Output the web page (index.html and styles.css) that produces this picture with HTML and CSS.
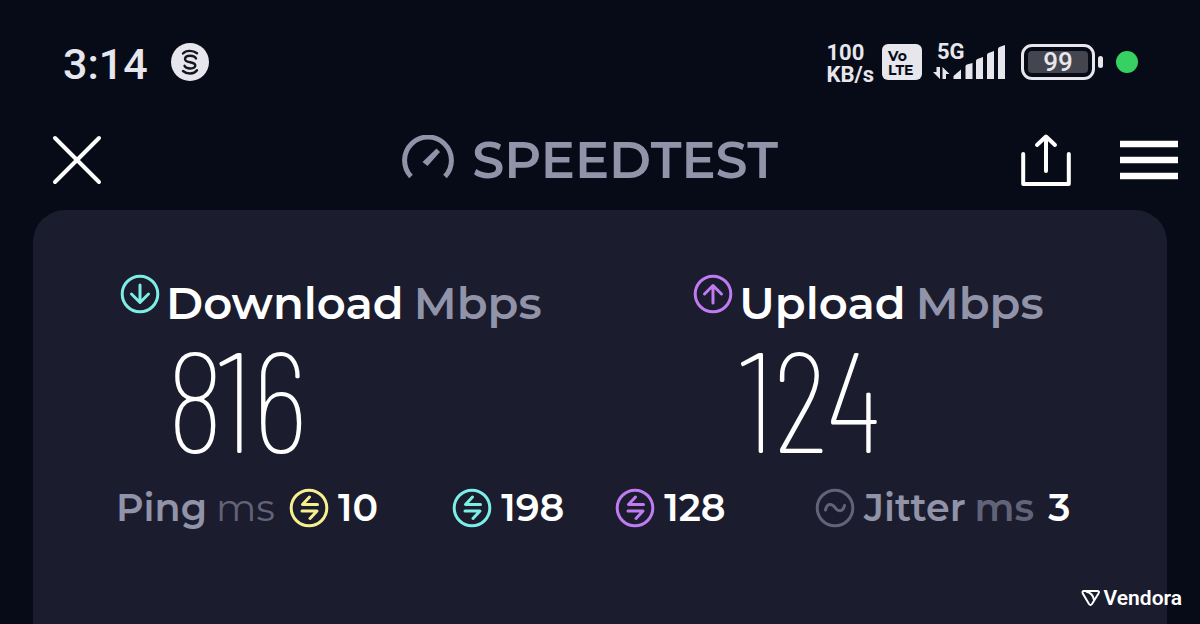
FILE: index.html
```
<!DOCTYPE html>
<html lang="en">
<head>
    <meta charset="UTF-8">
    <meta name="viewport" content="width=device-width, initial-scale=1.0">
    <title>Speedtest</title>
    <link rel="stylesheet" href="styles.css">
</head>
<body>
    <!-- icons used more than once -->
    <svg class="sprite" aria-hidden="true">
        <symbol id="icon-latency" viewBox="0 0 40 40">
            <circle cx="20" cy="20" r="17.8"/>
            <path d="M20.5 9 L13.5 16.5 H28.5 M13 23 H28 L21 30.5"/>
        </symbol>
    </svg>

    <div class="status-bar">
        <span class="clock">3:14</span>
        <svg class="app-badge" viewBox="0 0 38 38" aria-hidden="true">
            <circle cx="19" cy="19" r="19" fill="#e6e6ec"/>
            <g fill="none" stroke="#15161f" stroke-width="2.4" stroke-linecap="round">
                <path d="M25 15.5 C23.5 12 14.5 11.5 14 15.8 C13.6 20.5 24.5 18 24.3 22.5 C24 26.5 15 26.2 13.5 22.8"/>
                <path d="M12 10.5 C15 7 22 7 26 10.3"/>
                <path d="M12 28 C16 31.5 23 31.5 26 27.3"/>
            </g>
        </svg>

        <div class="status-right">
            <span class="net-speed"><span>100</span><span>KB/s</span></span>
            <span class="volte"><span>Vo</span><span>LTE</span></span>
            <span class="signal">
                <span class="signal-label">5G</span>
                <svg viewBox="0 0 74 36" width="74" height="36" fill="#e6e6ec" aria-hidden="true">
                    <path d="M4.5 23 H8 V35 L1 28 H4.5 Z M10.5 35 V23 L17.5 30 H14 V35 Z"/>
                    <path d="M21.5 35 V32 L29 25.5 V35 Z"/>
                    <path d="M33.5 35 V22.5 Q33.5 21 35 20.5 L40.5 19 V35 Z"/>
                    <path d="M44 35 V17 Q44 15.5 45.5 15 L51 13 V35 Z"/>
                    <path d="M55 35 V11 Q55 9.5 56.5 9 L62 7 V35 Z"/>
                    <path d="M66 35 V5 Q66 3.5 67.5 3 L73 1 V35 Z"/>
                </svg>
            </span>
            <span class="battery"><span class="battery-level">99</span></span>
            <span class="privacy-dot"></span>
        </div>
    </div>

    <header class="app-header">
        <div class="header-side">
            <button class="icon-btn" type="button" aria-label="Close">
                <svg viewBox="0 0 50 50" width="50" height="50">
                    <path d="M3 3 L47 47 M47 3 L3 47" fill="none" stroke="#fff" stroke-width="4" stroke-linecap="round"/>
                </svg>
            </button>
        </div>
        <h1 class="brand">
            <svg viewBox="0 0 52 50" width="52" height="50" aria-hidden="true">
                <path d="M9 41.5 A23.4 23.4 0 1 1 43 41.5" fill="none" stroke="#9193a8" stroke-width="5"/>
                <path d="M20.5 27 L34.5 13.5 L38 17 L25.5 31 Z" fill="#9193a8"/>
            </svg>
            SPEEDTEST
        </h1>
        <div class="header-side header-actions">
            <button class="icon-btn" type="button" aria-label="Share">
                <svg viewBox="0 0 50 54" width="50" height="54">
                    <path d="M2.2 21 V51 H47.8 V21 M25 38 V4 M16 12 L25 3.5 L34 12" fill="none" stroke="#fff" stroke-width="4" stroke-linecap="round" stroke-linejoin="round"/>
                </svg>
            </button>
            <button class="icon-btn" type="button" aria-label="Menu">
                <svg viewBox="0 0 58 40" width="58" height="40">
                    <path d="M0 4 H58 M0 20 H58 M0 36 H58" stroke="#fff" stroke-width="6.6"/>
                </svg>
            </button>
        </div>
    </header>

    <main class="card">
        <div class="results">
            <section class="result">
                <svg class="ring download" viewBox="0 0 40 40" aria-hidden="true">
                    <circle cx="20" cy="20" r="17.8"/>
                    <path d="M20 11 V28 M11.5 20 L20 28.5 L28.5 20"/>
                </svg>
                <h2>Download <span class="unit">Mbps</span></h2>
                <p class="speed">816</p>
            </section>
            <section class="result">
                <svg class="ring upload" viewBox="0 0 40 40" aria-hidden="true">
                    <circle cx="20" cy="20" r="17.8"/>
                    <path d="M20 29 V12 M11.5 20 L20 11.5 L28.5 20"/>
                </svg>
                <h2>Upload <span class="unit">Mbps</span></h2>
                <p class="speed">124</p>
            </section>
        </div>

        <div class="latency">
            <div class="metric">
                <span class="label">Ping <span class="ms">ms</span></span>
                <span class="reading">
                    <svg class="ring idle"><use href="#icon-latency"/></svg>
                    <span class="value">10</span>
                </span>
            </div>
            <div class="metric">
                <span class="reading">
                    <svg class="ring download"><use href="#icon-latency"/></svg>
                    <span class="value">198</span>
                </span>
            </div>
            <div class="metric">
                <span class="reading">
                    <svg class="ring upload"><use href="#icon-latency"/></svg>
                    <span class="value">128</span>
                </span>
            </div>
            <div class="metric jitter">
                <span class="reading">
                    <svg class="ring muted" viewBox="0 0 40 40" aria-hidden="true">
                        <circle cx="20" cy="20" r="17.8"/>
                        <path d="M10.5 22 C12 14.5 17 15.5 20 19.5 C23 24 28 24 29.5 17.5"/>
                    </svg>
                    <span class="label">Jitter <span class="ms">ms</span></span>
                </span>
                <span class="value">3</span>
            </div>
        </div>
    </main>

    <div class="watermark">
        <svg viewBox="0 0 20 18" width="20" height="18" aria-hidden="true">
            <path d="M3 2 H16 Q19 2 17.5 4.5 L11 15 Q9.5 17 8 15 L1.8 4.5 Q0.8 2 3 2 Z M5 2.5 C9.5 3.5 12.5 7 13 11" fill="none" stroke="#fff" stroke-width="2"/>
        </svg>
        Vendora
    </div>
</body>
</html>
```
FILE: styles.css
```
* {
    margin: 0;
    padding: 0;
    box-sizing: border-box;
}

body {
    font-family: "Montserrat", "Inter", sans-serif;
    background: #070b18;
    color: #fff;
    min-height: 100vh;
    display: flex;
    flex-direction: column;
    position: relative;
}

.sprite {
    display: none;
}

/* phone status bar */
.status-bar {
    display: flex;
    align-items: center;
    padding: 40px 62px 0 63px;
    height: 84px;
    font-family: "Roboto", sans-serif;
    color: #e6e6ec;
}

.clock {
    padding-top: 3px;
    font-size: 43px;
    font-weight: 500;
    line-height: 44px;
}

.app-badge {
    width: 38px;
    height: 38px;
    margin-left: 23px;
}

.status-right {
    display: flex;
    align-items: center;
    margin-left: auto;
}

.net-speed {
    display: flex;
    flex-direction: column;
    padding-top: 3px;
    font-size: 22px;
    font-weight: 700;
    line-height: 22px;
}

.volte {
    display: flex;
    flex-direction: column;
    align-items: flex-start;
    width: 40px;
    height: 36px;
    margin-left: 8px;
    padding: 5px 6px;
    border-radius: 6px;
    background: #e6e6ec;
    color: #070b18;
    font-family: "Montserrat", "Roboto", sans-serif;
    font-size: 14px;
    font-weight: 700;
    line-height: 14px;
}

.signal {
    position: relative;
    display: flex;
    margin-left: 10px;
}

.signal-label {
    position: absolute;
    top: -2px;
    left: 5px;
    font-size: 22px;
    font-weight: 700;
    line-height: 20px;
}

.battery {
    position: relative;
    width: 74px;
    height: 36px;
    margin-left: 15px;
    padding: 4px;
    border: 3px solid #e6e6ec;
    border-radius: 11px;
}

.battery::after {
    content: "";
    position: absolute;
    top: 9px;
    right: -11px;
    width: 5px;
    height: 12px;
    border-radius: 3px;
    background: #e6e6ec;
}

.battery-level {
    display: block;
    border-radius: 4px;
    background: #45454f;
    font-size: 26px;
    font-weight: 500;
    line-height: 22px;
    text-align: center;
}

.privacy-dot {
    width: 22px;
    height: 22px;
    margin-left: 21px;
    border-radius: 50%;
    background: #36d162;
}

/* app header */
.app-header {
    display: flex;
    align-items: center;
    height: 126px;
    padding: 25px 22px 0 52px;
}

.header-side {
    flex: 7;
    display: flex;
    align-items: center;
}

.header-actions {
    flex: 8;
    justify-content: flex-end;
    gap: 49px;
}

.icon-btn {
    display: flex;
    border: none;
    background: none;
    cursor: pointer;
}

.brand {
    display: flex;
    align-items: center;
    gap: 18px;
    color: #9193a8;
    font-size: 51px;
    font-weight: 600;
    line-height: 56px;
}

/* results card */
.card {
    flex: 1;
    margin: 0 33px;
    padding: 64px 0 32px;
    border-radius: 32px 32px 0 0;
    background: #1b1c2e;
}

.results {
    display: grid;
    grid-template-columns: 23fr 19fr;
    padding-left: 87px;
}

.result {
    display: grid;
    grid-template-columns: 40px 1fr;
    column-gap: 6px;
}

.result h2 {
    display: flex;
    gap: 10px;
    font-size: 45px;
    font-weight: 600;
    line-height: 58px;
}

.unit {
    color: #9193a8;
}

.speed {
    grid-column: 2;
    font-family: "Barlow Condensed", "Roboto Condensed", "Roboto", sans-serif;
    font-size: 142px;
    font-weight: 200;
    line-height: 128px;
}

.ring {
    width: 40px;
    height: 40px;
    flex: none;
    fill: none;
    stroke: currentColor;
    stroke-width: 3;
    stroke-linecap: round;
    stroke-linejoin: round;
}

.download {
    color: #7ceee6;
}

.upload {
    color: #c17bf2;
}

.idle {
    color: #f8f08e;
}

.muted {
    color: #626378;
}

.latency {
    display: grid;
    grid-template-columns: 64fr 31fr 38fr 67fr;
    padding-left: 83px;
    margin-top: 28px;
}

.metric {
    display: flex;
    align-items: center;
    gap: 14px;
    font-size: 38px;
    font-weight: 600;
    line-height: 40px;
}

.reading {
    display: flex;
    align-items: center;
    gap: 9px;
}

.label {
    display: flex;
    gap: 9px;
    color: #9193a8;
}

.ms {
    color: #626378;
    font-weight: 400;
}

.jitter .ms {
    font-weight: 600;
}

.watermark {
    position: absolute;
    right: 18px;
    bottom: 14px;
    display: flex;
    align-items: center;
    gap: 3px;
    font-family: "Roboto", sans-serif;
    font-size: 21px;
    font-weight: 600;
    line-height: 24px;
}
```
